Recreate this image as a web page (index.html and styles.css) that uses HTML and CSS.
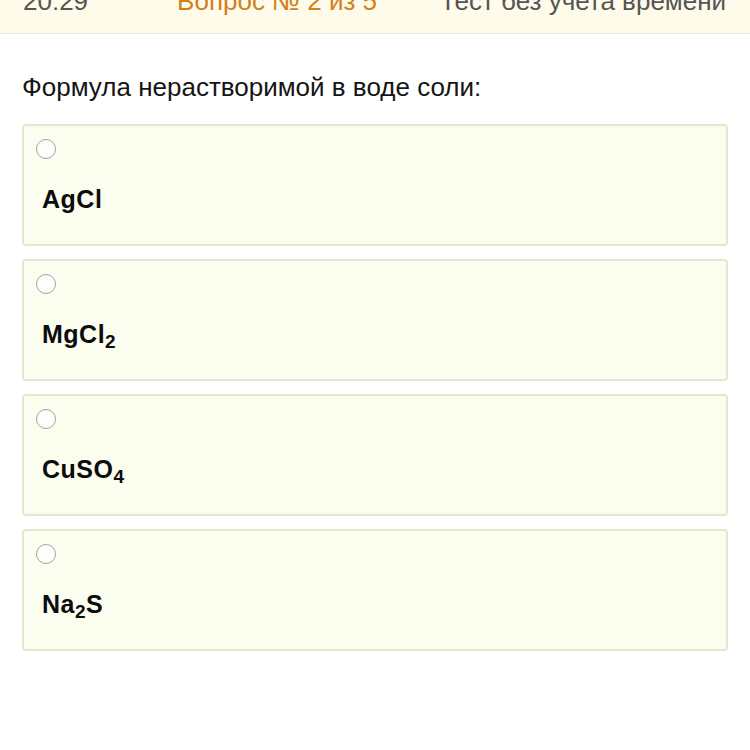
FILE: index.html
```html
<!DOCTYPE html>
<html lang="ru">
<head>
<meta charset="utf-8">
<title>Тест</title>
<link rel="stylesheet" href="styles.css">
</head>
<body>
<header class="topbar">
  <span class="time">20:29</span>
  <span class="qnum">Вопрос № 2 из 5</span>
  <span class="mode">Тест без учета времени</span>
</header>
<main class="content">
  <p class="question">Формула нерастворимой в воде соли:</p>
  <div class="answers">
    <label class="answer">
      <span class="radio"></span>
      <span class="formula">AgCl</span>
    </label>
    <label class="answer">
      <span class="radio"></span>
      <span class="formula">MgCl<sub>2</sub></span>
    </label>
    <label class="answer">
      <span class="radio"></span>
      <span class="formula">CuSO<sub>4</sub></span>
    </label>
    <label class="answer">
      <span class="radio"></span>
      <span class="formula">Na<sub>2</sub>S</span>
    </label>
  </div>
</main>
</body>
</html>
```

FILE: styles.css
```css
* { box-sizing: border-box; }
body {
  margin: 0;
  background: #ffffff;
  font-family: "Liberation Sans", Arial, sans-serif;
  color: #111;
}
.topbar {
  height: 34px;
  background: #fefbea;
  border-bottom: 1px solid #e7e6de;
  display: flex;
  align-items: flex-end;
  padding: 0 0 19px 23px;
  font-size: 26px;
  line-height: 26px;
  color: #555;
  white-space: nowrap;
}
.qnum {
  color: #d2801a;
  margin-left: 89px;
}
.mode {
  margin-left: 63px;
}
.content {
  padding: 0 22px;
}
.question {
  margin: 38px 0 0 0;
  font-size: 26px;
  line-height: 30px;
  color: #151515;
}
.answers {
  margin-top: 22px;
  display: flex;
  flex-direction: column;
  gap: 13px;
}
.answer {
  display: flex;
  flex-direction: column;
  align-items: flex-start;
  height: 122px;
  background: #fbfdee;
  border: 2px solid #e0e9d0;
  border-radius: 4px;
  padding: 13px 18px 0 12px;
}
.radio {
  width: 20px;
  height: 20px;
  border-radius: 50%;
  border: 1px solid #a3a3a3;
  background: #fdfdfb;
}
.formula {
  margin-top: 26px;
  margin-left: 6px;
  font-size: 25px;
  line-height: 28px;
  letter-spacing: 0.5px;
  font-weight: bold;
  color: #0c0c0c;
}
.formula sub {
  font-size: 19px;
  line-height: 0;
  vertical-align: -5px;
}
```
